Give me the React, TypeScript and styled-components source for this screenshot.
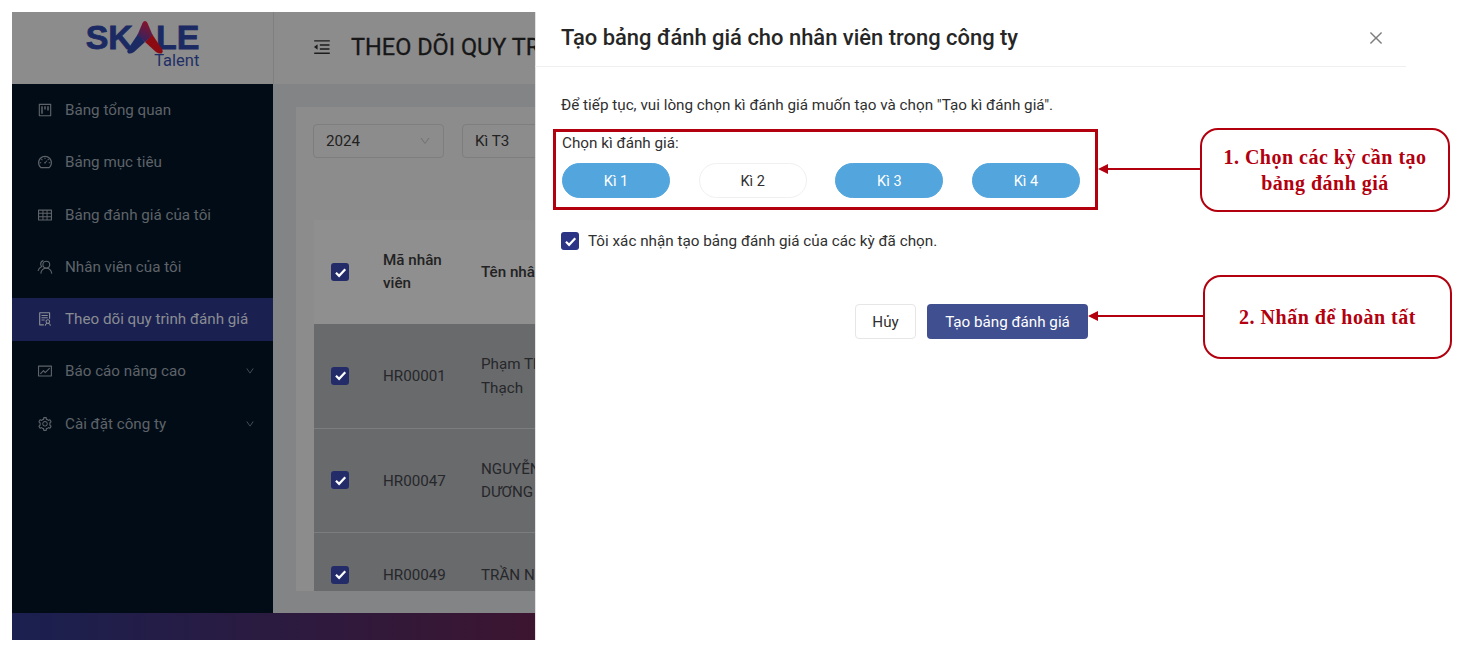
import React from 'react';
import styled, { createGlobalStyle } from 'styled-components';
import {
  AiOutlineClose,
  AiOutlineDashboard,
  AiOutlineDown,
  AiOutlineFund,
  AiOutlineMenuFold,
  AiOutlineProject,
  AiOutlineSetting,
  AiOutlineSolution,
  AiOutlineTable,
} from 'react-icons/ai';

const GlobalStyle = createGlobalStyle`
  html, body {
    margin: 0;
    padding: 0;
    background: #fff;
    font-family: Roboto, "Noto Sans", sans-serif;
    overflow: hidden;
  }
`;

const TeamIcon = () => (
  <svg width="16" height="16" viewBox="0 0 16 16" fill="none" stroke="currentColor" strokeWidth="1.1">
    <circle cx="9.3" cy="5.6" r="3.4" />
    <path d="M3.8 14.6c.4-3.2 2.6-5.4 5.500-5.400s5 2.200 5.500 5.400" />
    <path d="M6.400 1.600C4.600 2 3.600 3.400 3.700 5.200c0 .9.400 1.600 1 2.200C2.600 8.400 1.400 10 1 12" />
  </svg>
);

const menuItems = [
  { label: 'Bảng tổng quan', icon: <AiOutlineProject /> },
  { label: 'Bảng mục tiêu', icon: <AiOutlineDashboard /> },
  { label: 'Bảng đánh giá của tôi', icon: <AiOutlineTable /> },
  { label: 'Nhân viên của tôi', icon: <TeamIcon /> },
  { label: 'Theo dõi quy trình đánh giá', icon: <AiOutlineSolution />, active: true },
  { label: 'Báo cáo nâng cao', icon: <AiOutlineFund />, arrow: true },
  { label: 'Cài đặt công ty', icon: <AiOutlineSetting />, arrow: true },
];

const rows = [
  { code: 'HR00001', name: ['Phạm Thị', 'Thạch'], height: 104.5 },
  { code: 'HR00047', name: ['NGUYỄN', 'DƯƠNG'], height: 104.5 },
  { code: 'HR00049', name: ['TRẦN N'], height: 84 },
];

const periods = [
  { label: 'Kì 1', selected: true },
  { label: 'Kì 2', selected: false },
  { label: 'Kì 3', selected: true },
  { label: 'Kì 4', selected: true },
];

const Check = ({ $dim }: { $dim?: boolean }) => (
  <CheckBox $dim={$dim}>
    <svg width="13" height="13" viewBox="0 0 12 12" fill="none" stroke="#fff" strokeWidth="2">
      <path d="M1.800 6.200l2.900 2.900L10.400 3" />
    </svg>
  </CheckBox>
);

const App = () => {
  return (
    <Page>
      <GlobalStyle />
      <Backdrop>
        <TopRow>
          <LogoCell>
            <Logo>
              <LogoWord>
                SK
                <LogoMark width="36" height="33" viewBox="0 0 36 33">
                  <defs>
                    <linearGradient id="markTop" x1="0.7" y1="0" x2="0.3" y2="1">
                      <stop offset="0" stopColor="#8e1126" />
                      <stop offset="1" stopColor="#2c2566" />
                    </linearGradient>
                  </defs>
                  <path d="M11 13l7 8-11 10q-3 2-5.500 1.500-2-1.500-.5-4.500z" fill="#1b2a63" />
                  <path d="M25 13l-7 8 11 10q3 2 5.500 1.500 2-1.500.5-4.500z" fill="#8c0b12" />
                  <path d="M18 0q1.500 0 2.500 2l5 12-7.500 7-7.500-7 5-12q1-2 2.500-2z" fill="url(#markTop)" />
                </LogoMark>
                LE
              </LogoWord>
              <LogoSub>Talent</LogoSub>
            </Logo>
          </LogoCell>
          <TitleBar>
            <FoldIcon>
              <AiOutlineMenuFold />
            </FoldIcon>
            <PageTitle>THEO DÕI QUY TRÌNH ĐÁNH GIÁ</PageTitle>
          </TitleBar>
        </TopRow>
        <MiddleRow>
          <Sidebar>
            {menuItems.map((item) => (
              <MenuItem key={item.label} $active={item.active}>
                <MenuIcon>{item.icon}</MenuIcon>
                <MenuLabel>{item.label}</MenuLabel>
                {item.arrow ? (
                  <MenuArrow>
                    <AiOutlineDown />
                  </MenuArrow>
                ) : null}
              </MenuItem>
            ))}
          </Sidebar>
          <Content>
            <Card>
              <Filters>
                <Select $width={131}>
                  2024
                  <SelectArrow>
                    <AiOutlineDown />
                  </SelectArrow>
                </Select>
                <Select $width={120}>Kì T3</Select>
              </Filters>
              <Table>
                <HeadRow>
                  <CheckCell>
                    <Check $dim />
                  </CheckCell>
                  <HeadCell>
                    Mã nhân
                    <br />
                    viên
                  </HeadCell>
                  <HeadCell>Tên nhân viên</HeadCell>
                </HeadRow>
                {rows.map((row) => (
                  <BodyRow key={row.code} $height={row.height}>
                    <CheckCell>
                      <Check $dim />
                    </CheckCell>
                    <BodyCell>{row.code}</BodyCell>
                    <BodyCell>
                      {row.name.map((line) => (
                        <div key={line}>{line}</div>
                      ))}
                    </BodyCell>
                  </BodyRow>
                ))}
              </Table>
            </Card>
          </Content>
        </MiddleRow>
        <FooterBar />
      </Backdrop>

      <Dialog>
        <DialogHeader>
          <DialogTitle>Tạo bảng đánh giá cho nhân viên trong công ty</DialogTitle>
          <CloseButton>
            <AiOutlineClose />
          </CloseButton>
        </DialogHeader>
        <DialogBody>
          <Intro>Để tiếp tục, vui lòng chọn kì đánh giá muốn tạo và chọn "Tạo kì đánh giá".</Intro>
          <PeriodBox>
            <PeriodLabel>Chọn kì đánh giá:</PeriodLabel>
            <PeriodList>
              {periods.map((period) => (
                <PeriodPill key={period.label} $selected={period.selected}>
                  {period.label}
                </PeriodPill>
              ))}
            </PeriodList>
          </PeriodBox>
          <ConfirmRow>
            <Check />
            Tôi xác nhận tạo bảng đánh giá của các kỳ đã chọn.
          </ConfirmRow>
          <Actions>
            <CancelButton>Hủy</CancelButton>
            <SubmitButton>Tạo bảng đánh giá</SubmitButton>
          </Actions>
        </DialogBody>
      </Dialog>

      <Callout $left={1200} $top={128} $width={250} $height={84}>
        1. Chọn các kỳ cần tạo
        <br />
        bảng đánh giá
      </Callout>
      <Arrow $left={1098} $top={163} width="102" height="12" viewBox="0 0 102 12">
        <path d="M8 6H102" stroke="#b3000f" strokeWidth="2" />
        <path d="M0 6L10 1V11z" fill="#b3000f" />
      </Arrow>
      <Callout $left={1203} $top={275} $width={249} $height={84}>
        2. Nhấn để hoàn tất
      </Callout>
      <Arrow $left={1088} $top={310} width="115" height="12" viewBox="0 0 115 12">
        <path d="M8 6H115" stroke="#b3000f" strokeWidth="2" />
        <path d="M0 6L10 1V11z" fill="#b3000f" />
      </Arrow>
    </Page>
  );
};

const Page = styled.div`
  position: relative;
  display: flex;
  align-items: flex-start;
  width: 1459px;
  height: 645px;
  padding: 12px 0 0 12px;
  box-sizing: border-box;
  background: #fff;
  overflow: hidden;
`;

const Backdrop = styled.div`
  display: flex;
  flex-direction: column;
  flex: none;
  width: 523px;
  height: 628px;
  overflow: hidden;
`;

const TopRow = styled.div`
  display: flex;
  flex: none;
  height: 72px;
  background: #8c8c8c;
  box-shadow: 0 1px 3px rgba(0, 0, 0, 0.1);
`;

const LogoCell = styled.div`
  display: flex;
  justify-content: center;
  flex: none;
  box-sizing: border-box;
  width: 262px;
  padding-top: 10px;
  border-right: 1px solid #7f7f7f;
`;

const Logo = styled.div`
  display: flex;
  flex-direction: column;
  align-items: flex-end;
`;

const LogoWord = styled.div`
  display: flex;
  align-items: flex-end;
  height: 31px;
  font-family: 'Liberation Sans', sans-serif;
  font-size: 34px;
  font-weight: 700;
  line-height: 31px;
  color: #1b2a63;
  -webkit-text-stroke: 0.8px #1b2a63;
`;

const LogoMark = styled.svg`
  margin: 0 -7px 0 -6px;
  position: relative;
  top: 1px;
`;

const LogoSub = styled.div`
  font-size: 16.500px;
  line-height: 16px;
  color: #1f2f66;
`;

const TitleBar = styled.div`
  display: flex;
  align-items: center;
  flex: 1;
  min-width: 0;
  padding: 0 0 3px 38px;
  white-space: nowrap;
  overflow: hidden;
`;

const FoldIcon = styled.span`
  display: flex;
  margin-right: 19px;
  font-size: 20px;
  color: #1d1d1d;
`;

const PageTitle = styled.div`
  font-size: 23.500px;
  font-weight: 400;
  -webkit-text-stroke: 0.3px #171717;
  color: #171717;
`;

const MiddleRow = styled.div`
  display: flex;
  flex: 1;
  min-height: 0;
`;

const Sidebar = styled.nav`
  display: flex;
  flex-direction: column;
  flex: none;
  gap: 9.300px;
  box-sizing: border-box;
  width: 261px;
  padding-top: 4.500px;
  background: #010c17;
`;

const MenuItem = styled.div<{ $active?: boolean }>`
  display: flex;
  align-items: center;
  height: 43px;
  padding: 0 18px 0 25px;
  background: ${(p) => (p.$active ? '#1a2150' : 'transparent')};
  color: ${(p) => (p.$active ? '#8a8c93' : '#5f6368')};
`;

const MenuIcon = styled.span`
  display: flex;
  justify-content: center;
  flex: none;
  width: 16px;
  margin-right: 12px;
  font-size: 16px;
`;

const MenuLabel = styled.span`
  flex: 1;
  font-size: 15.200px;
  white-space: nowrap;
`;

const MenuArrow = styled.span`
  display: flex;
  font-size: 10px;
  color: #55595e;
`;

const Content = styled.main`
  flex: 1;
  min-width: 0;
  padding: 23px 0 22px 23px;
  background: #838486;
`;

const Card = styled.section`
  height: 100%;
  box-sizing: border-box;
  width: 400px;
  padding: 17px 0 0 17px;
  background: #8c8c8c;
  overflow: hidden;
`;

const Filters = styled.div`
  display: flex;
  gap: 18px;
  height: 34px;
  margin-bottom: 62px;
`;

const Select = styled.div<{ $width: number }>`
  display: flex;
  align-items: center;
  justify-content: space-between;
  flex: none;
  box-sizing: border-box;
  width: ${(p) => p.$width}px;
  padding: 0 12px;
  border: 1px solid #7e7e7e;
  border-radius: 4px;
  font-size: 15.200px;
  color: #222;
`;

const SelectArrow = styled.span`
  display: flex;
  font-size: 12px;
  color: #747474;
`;

const Table = styled.div`
  margin-left: 1px;
`;

const HeadRow = styled.div`
  display: grid;
  grid-template-columns: 69px 98px 200px;
  align-items: center;
  height: 104px;
  background: #8f8f8f;
`;

const BodyRow = styled.div<{ $height: number }>`
  display: grid;
  grid-template-columns: 69px 98px 200px;
  align-items: center;
  box-sizing: border-box;
  height: ${(p) => p.$height}px;
  background: #696a6c;
  border-bottom: 1px solid #7c7d7f;
`;

const CheckCell = styled.div`
  display: flex;
  padding-left: 17px;
`;

const HeadCell = styled.div`
  font-size: 15.200px;
  font-weight: 500;
  line-height: 23px;
  color: #222;
`;

const BodyCell = styled.div`
  padding-top: 2px;
  font-size: 15.200px;
  line-height: 23.500px;
  color: #26272a;
  white-space: nowrap;
`;

const CheckBox = styled.span<{ $dim?: boolean }>`
  display: flex;
  align-items: center;
  justify-content: center;
  flex: none;
  width: 18px;
  height: 18px;
  border-radius: 3px;
  background: ${(p) => (p.$dim ? '#232c69' : '#2b3485')};
`;

const FooterBar = styled.div`
  flex: none;
  height: 27px;
  background: linear-gradient(90deg, #1a2050 0%, #3c1530 100%);
`;

const Dialog = styled.section`
  flex: none;
  width: 871px;
  height: 628px;
  background: #fff;
  box-shadow: inset 1px 0 0 #e2e2e2;
`;

const DialogHeader = styled.header`
  display: flex;
  align-items: center;
  justify-content: space-between;
  box-sizing: border-box;
  height: 55px;
  padding: 0 21px 3px 26px;
  border-bottom: 1px solid #efefef;
`;

const DialogTitle = styled.h2`
  margin: 0;
  font-size: 21.950px;
  font-weight: 500;
  color: #262626;
`;

const CloseButton = styled.span`
  display: flex;
  font-size: 18px;
  color: #7d7d7d;
`;

const DialogBody = styled.div`
  padding: 29px 0 0 26px;
`;

const Intro = styled.p`
  margin: 0 0 15px;
  font-size: 15.250px;
  line-height: 18px;
  color: #303030;
`;

const PeriodBox = styled.div`
  box-sizing: border-box;
  width: 545px;
  height: 81px;
  margin-left: -8px;
  padding: 2px 15px 0 6px;
  border: 3px solid #b3000f;
`;

const PeriodLabel = styled.div`
  font-size: 15.250px;
  line-height: 18px;
  color: #303030;
`;

const PeriodList = styled.div`
  display: flex;
  justify-content: space-between;
  margin-top: 11px;
`;

const PeriodPill = styled.div<{ $selected: boolean }>`
  display: flex;
  align-items: center;
  justify-content: center;
  box-sizing: border-box;
  width: 108px;
  height: 35px;
  padding-top: 1px;
  border-radius: 18px;
  border: 1px solid ${(p) => (p.$selected ? '#52a5dd' : '#f0f0f0')};
  background: ${(p) => (p.$selected ? '#52a5dd' : '#fff')};
  color: ${(p) => (p.$selected ? '#fff' : '#303030')};
  font-size: 14.500px;
`;

const ConfirmRow = styled.label`
  display: flex;
  align-items: center;
  gap: 9px;
  height: 18px;
  margin-top: 22px;
  font-size: 15.250px;
  color: #303030;
`;

const Actions = styled.div`
  display: flex;
  justify-content: flex-end;
  gap: 11px;
  width: 527px;
  margin-top: 54px;
`;

const CancelButton = styled.button`
  box-sizing: border-box;
  width: 61px;
  height: 35px;
  padding: 0;
  border: 1px solid #e6e6e6;
  border-radius: 4px;
  background: #fff;
  font-family: inherit;
  font-size: 15.200px;
  color: #303030;
`;

const SubmitButton = styled.button`
  box-sizing: border-box;
  width: 161px;
  height: 35px;
  padding: 0;
  border: none;
  border-radius: 4px;
  background: #3f4f8f;
  font-family: inherit;
  font-size: 15.200px;
  color: #fff;
`;

const Callout = styled.div<{ $left: number; $top: number; $width: number; $height: number }>`
  position: absolute;
  left: ${(p) => p.$left}px;
  top: ${(p) => p.$top}px;
  display: flex;
  align-items: center;
  justify-content: center;
  box-sizing: border-box;
  width: ${(p) => p.$width}px;
  height: ${(p) => p.$height}px;
  padding-bottom: 1px;
  border: 2px solid #b3000f;
  border-radius: 18px;
  background: #fff;
  font-family: 'Liberation Serif', serif;
  font-size: 20px;
  font-weight: 700;
  line-height: 26px;
  letter-spacing: 0.5px;
  color: #b3000f;
  text-align: center;
`;

const Arrow = styled.svg<{ $left: number; $top: number }>`
  position: absolute;
  left: ${(p) => p.$left}px;
  top: ${(p) => p.$top}px;
`;

export default App;
